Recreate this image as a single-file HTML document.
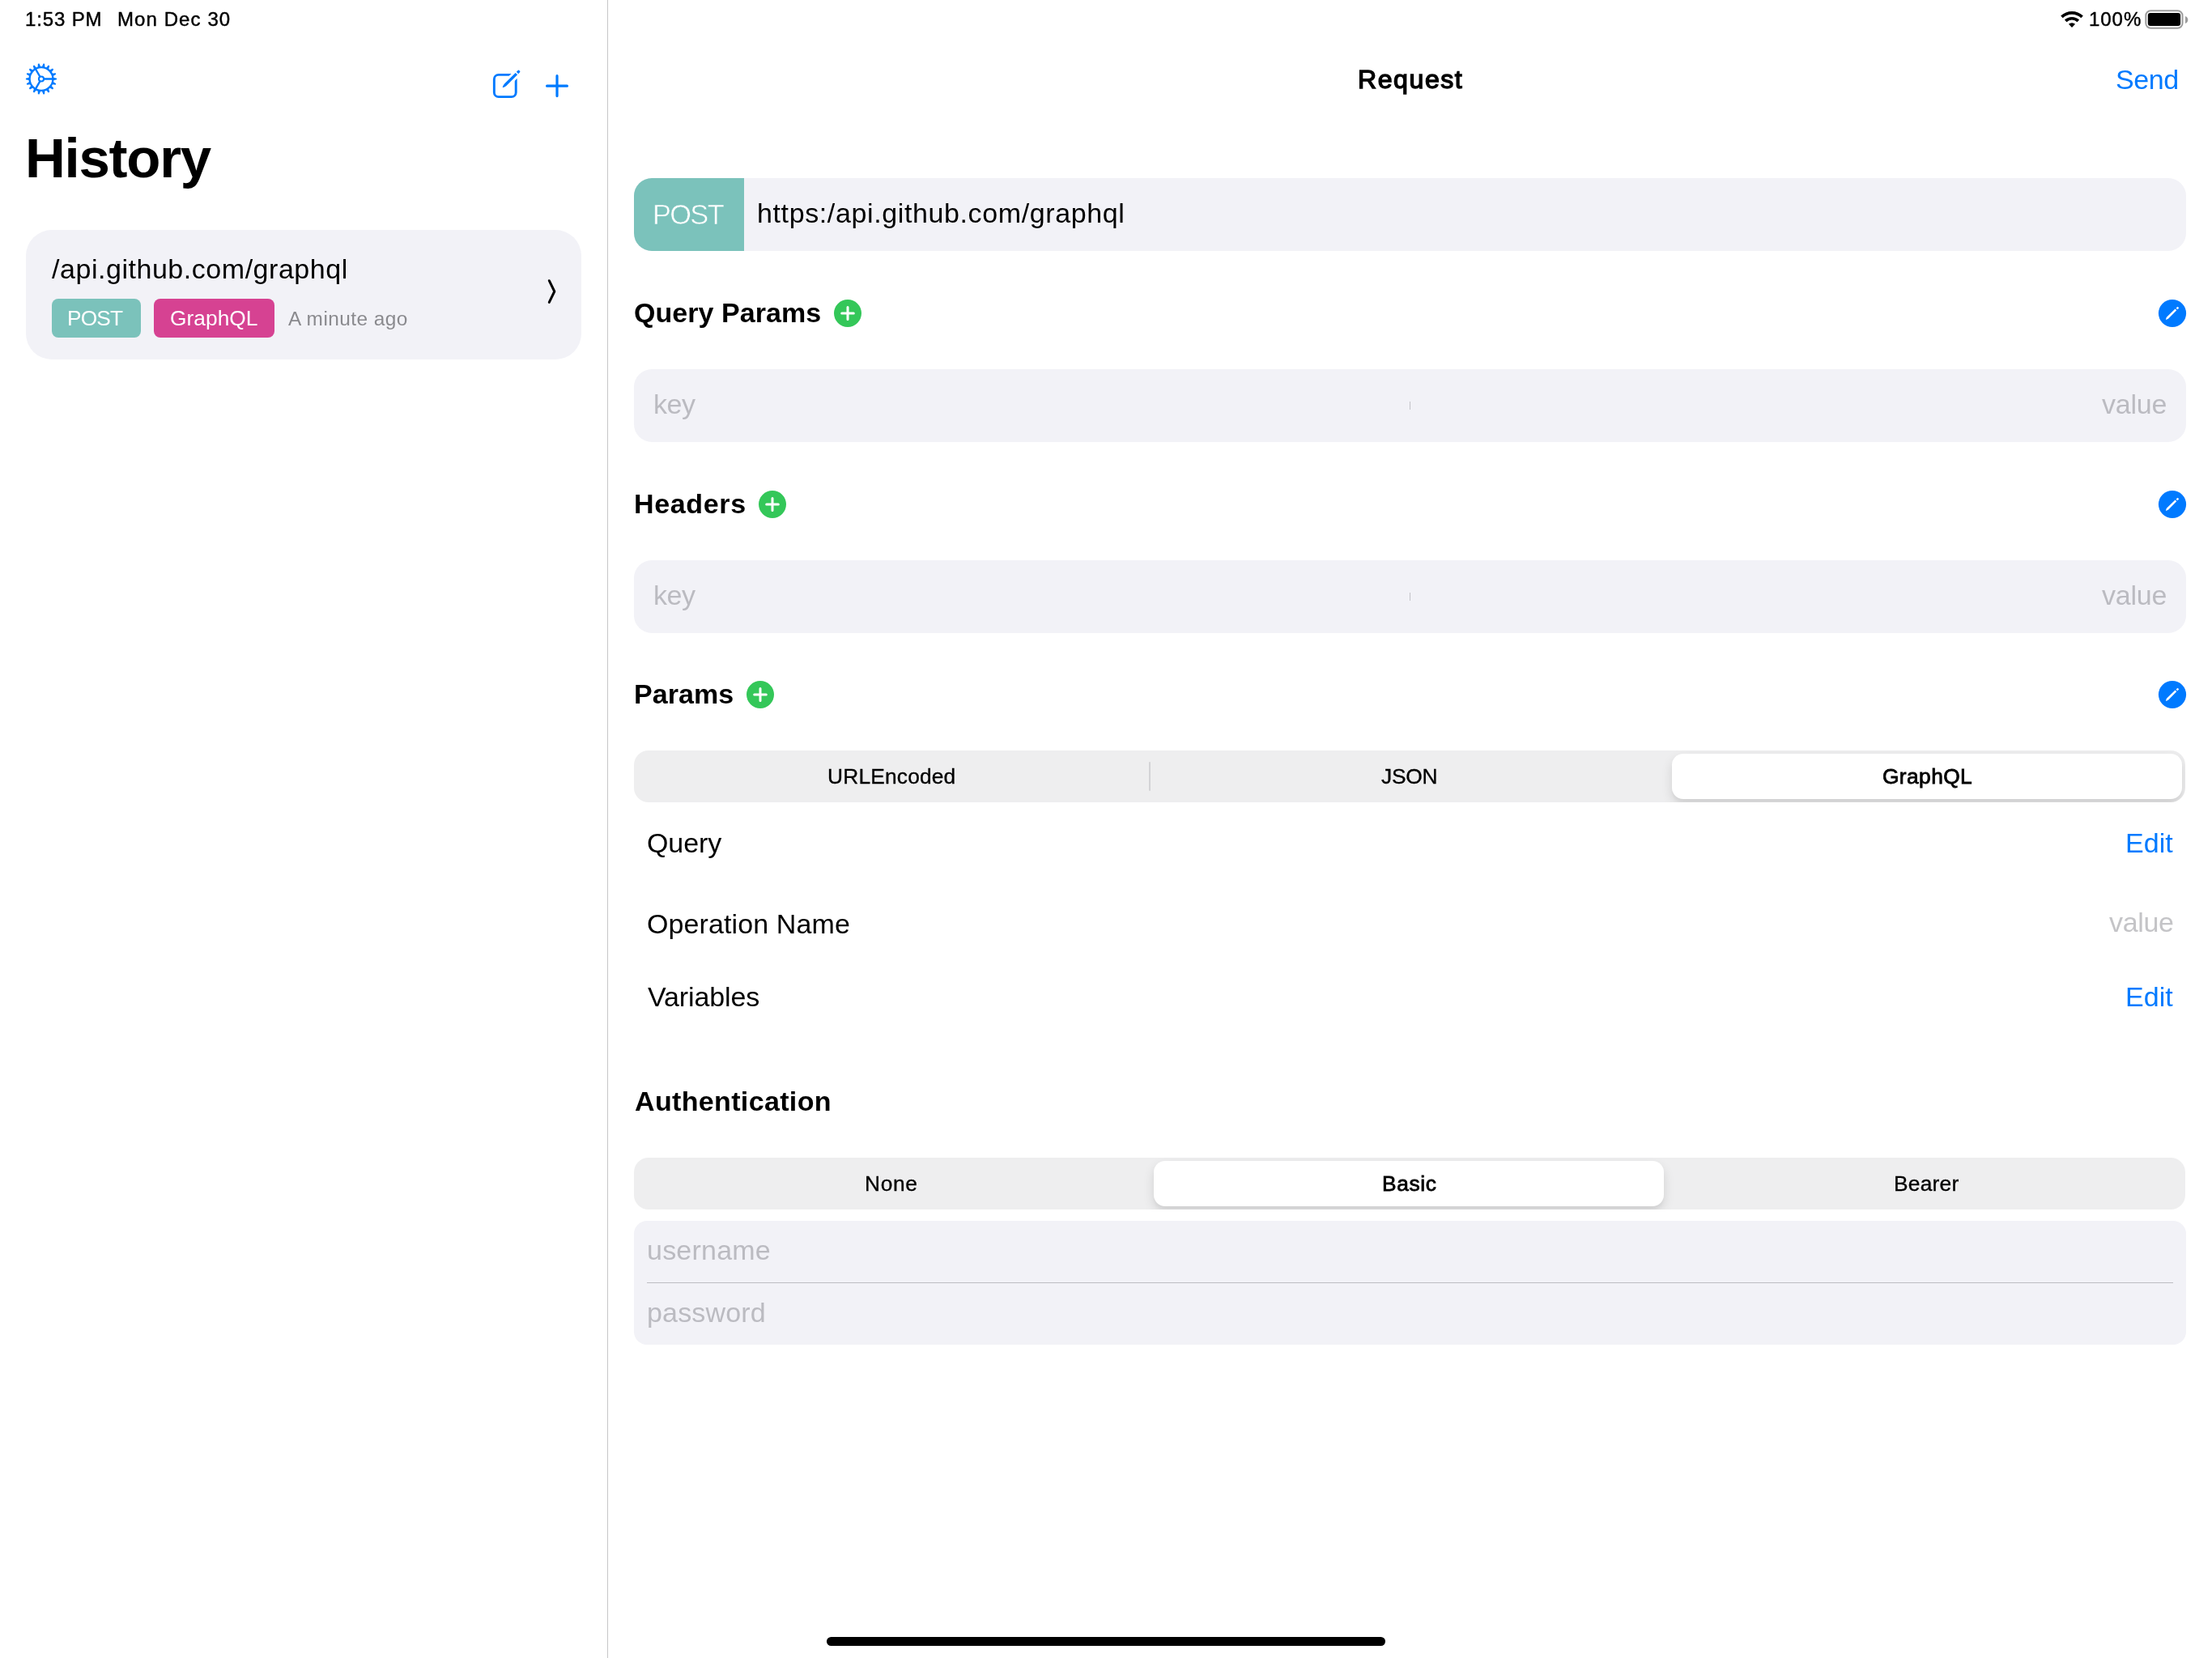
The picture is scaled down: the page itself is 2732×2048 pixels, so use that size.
<!DOCTYPE html>
<html lang="en"><head><meta charset="utf-8"><title>Request</title>
<style>
html,body{margin:0;padding:0;background:#fff;}
body{width:2732px;height:2048px;position:relative;overflow:hidden;font-family:"Liberation Sans",sans-serif;}
.t{position:absolute;line-height:0;white-space:nowrap;will-change:transform;}
.b{position:absolute;box-sizing:border-box;}
svg{position:absolute;overflow:visible;}
</style></head><body>

<header class="statusbar">
<div class="t" style="left:31.00px;top:23.98px;font-size:24px;color:#000;letter-spacing:0.861px;-webkit-text-stroke:0.45px #000;">1:53 PM</div>
<div class="t" style="left:145.36px;top:23.98px;font-size:24px;color:#000;letter-spacing:1.084px;-webkit-text-stroke:0.45px #000;">Mon Dec 30</div>
<div class="t" style="left:2580.00px;top:23.98px;font-size:24px;color:#000;letter-spacing:0.950px;-webkit-text-stroke:0.45px #000;">100%</div>
<svg style="left:2540px;top:10px" width="40" height="28" viewBox="2540 10 40 28"><path d="M2545.16 19.47 A20.1 20.1 0 0 1 2572.84 19.47 L2570.29 22.15 A16.4 16.4 0 0 0 2547.71 22.15 Z M2549.95 24.51 A13.15 13.15 0 0 1 2568.05 24.51 L2565.50 27.20 A9.45 9.45 0 0 0 2552.50 27.20 Z M2559.00 34.05 L2554.94 29.77 A5.9 5.9 0 0 1 2563.06 29.77 Z" fill="#000"/></svg>
<svg style="left:2645px;top:8px" width="56" height="32" viewBox="2645 8 56 32"><rect x="2650.3" y="13.2" width="45.2" height="21.6" rx="6" fill="none" stroke="#9c9c9c" stroke-width="2"/><rect x="2652.8" y="16" width="40.3" height="16" rx="3" fill="#000"/></svg>
<svg style="left:2698px;top:18px" width="6" height="14" viewBox="2698 18 6 14"><path d="M2699 20 Q2702.3 21.4 2702.3 24.5 Q2702.3 27.6 2699 29 Z" fill="#9c9c9c"/></svg>

</header>
<aside class="sidebar">
<div class="b" style="left:750px;top:0;width:1px;height:2048px;background:#c6c6c8;"></div>
<svg style="left:0;top:0" width="120" height="140" viewBox="0 0 120 140">
<path d="M65.89 95.70 L70.08 96.64 L70.08 98.36 L65.89 99.30Z M65.61 100.91 L69.22 103.22 L68.64 104.83 L64.38 104.28Z M63.56 105.70 L66.17 109.11 L65.06 110.42 L61.25 108.45Z M60.00 109.50 L61.28 113.59 L59.80 114.45 L56.89 111.29Z M55.35 111.85 L55.16 116.14 L53.47 116.44 L51.82 112.48Z M50.18 112.48 L48.53 116.44 L46.84 116.14 L46.65 111.85Z M45.11 111.29 L42.20 114.45 L40.72 113.59 L42.00 109.50Z M40.75 108.45 L36.94 110.42 L35.83 109.11 L38.44 105.70Z M37.62 104.28 L33.36 104.83 L32.78 103.22 L36.39 100.91Z M36.11 99.30 L31.92 98.36 L31.92 96.64 L36.11 95.70Z M36.39 94.09 L32.78 91.78 L33.36 90.17 L37.62 90.72Z M38.44 89.30 L35.83 85.89 L36.94 84.58 L40.75 86.55Z M42.00 85.50 L40.72 81.41 L42.20 80.55 L45.11 83.71Z M46.65 83.15 L46.84 78.86 L48.53 78.56 L50.18 82.52Z M51.82 82.52 L53.47 78.56 L55.16 78.86 L55.35 83.15Z M56.89 83.71 L59.80 80.55 L61.28 81.41 L60.00 85.50Z M61.25 86.55 L65.06 84.58 L66.17 85.89 L63.56 89.30Z M64.38 90.72 L68.64 90.17 L69.22 91.78 L65.61 94.09Z" fill="#007aff"/>
<circle cx="51.0" cy="97.5" r="14.4" fill="none" stroke="#007aff" stroke-width="2.3"/>
<circle cx="51.0" cy="97.5" r="3.05" fill="none" stroke="#007aff" stroke-width="2.1"/>
<path d="M54.60 97.50 L65.20 97.50 M49.20 94.38 L43.90 85.20 M49.20 100.62 L43.90 109.80" fill="none" stroke="#007aff" stroke-width="2.3"/>
</svg>
<svg style="left:600px;top:80px" width="110" height="50" viewBox="600 80 110 50">
<rect x="610.35" y="92.35" width="26.85" height="27.25" rx="5.4" fill="none" stroke="#007aff" stroke-width="2.9"/>
<path d="M622.77 106.23 L642.57 86.43" fill="none" stroke="#fff" stroke-width="9.2" stroke-linecap="butt"/>
<path d="M620.65 108.35 Q621.14 105.73 622.98 103.61 L636.70 89.89 L639.11 92.30 L625.39 106.02 Q623.27 107.86 620.65 108.35 Z M637.83 88.76 L639.67 86.92 Q640.45 86.15 641.23 86.92 L642.08 87.77 Q642.85 88.55 642.08 89.33 L640.24 91.17 Z" fill="#007aff"/>
<path d="M675.6 106.15 H700.4 M688 93.7 V118.6" fill="none" stroke="#007aff" stroke-width="3.2" stroke-linecap="round"/>
</svg>
<div class="t" style="left:31.28px;top:196.09px;font-size:69px;color:#000;font-weight:700;letter-spacing:-1.275px;">History</div>
<!-- history item -->
<div class="b" style="left:32px;top:284px;width:686px;height:160px;border-radius:32px;background:#f2f2f7;"></div>
<div class="b" style="left:64px;top:369px;width:110px;height:48px;border-radius:8px;background:#7bc2bb;"></div>
<div class="b" style="left:190px;top:369px;width:149px;height:48px;border-radius:8px;background:#d64292;"></div>
<div class="t" style="left:64.00px;top:331.62px;font-size:34px;color:#000;letter-spacing:0.537px;">/api.github.com/graphql</div>
<div class="t" style="left:83.04px;top:393.09px;font-size:26.3px;color:#fff;letter-spacing:-0.815px;">POST</div>
<div class="t" style="left:209.58px;top:393.09px;font-size:26.3px;color:#fff;letter-spacing:0.052px;">GraphQL</div>
<div class="t" style="left:356.25px;top:393.55px;font-size:24.4px;color:#8a8a8e;letter-spacing:0.458px;">A minute ago</div>
<svg style="left:670px;top:340px" width="24" height="40" viewBox="670 340 24 40"><path d="M678.3 346.7 L684.8 360 L678.3 373.4" fill="none" stroke="#000" stroke-width="3" stroke-linecap="round" stroke-linejoin="round"/></svg>
</aside>
<main class="detail">
<div class="t" style="left:1676.98px;top:97.91px;font-size:32px;color:#000;letter-spacing:1.595px;-webkit-text-stroke:1.4px #000;">Request</div>
<div class="t" style="left:2613.36px;top:98.02px;font-size:34px;color:#007aff;letter-spacing:-0.424px;">Send</div>
<!-- url bar -->
<div class="b" style="left:783px;top:220px;width:1917px;height:90px;border-radius:22px;background:#f2f2f7;overflow:hidden;"><div class="b" style="left:0;top:0;width:136px;height:90px;background:#7bc2bb;"></div></div>
<div class="t" style="left:806.20px;top:265.08px;font-size:34.4px;color:#fff;letter-spacing:-1.666px;-webkit-text-stroke:0.55px #7bc2bb;">POST</div>
<div class="t" style="left:935.44px;top:263.32px;font-size:34px;color:#000;letter-spacing:0.615px;">https:/api.github.com/graphql</div>
<!-- query params -->
<div class="t" style="left:783.11px;top:385.92px;font-size:34px;color:#000;font-weight:700;letter-spacing:0.064px;">Query Params</div>
<svg style="left:1030.0px;top:369.9px" width="34" height="34" viewBox="-17 -17 34 34"><circle r="17" fill="#34c759"/><path d="M-7.3 0 H7.3 M0 -7.4 V7.4" stroke="#fff" stroke-width="3" stroke-linecap="round" fill="none"/></svg>
<svg style="left:2666.0px;top:370.0px" width="34" height="34" viewBox="-17 -17 34 34"><circle r="17.1" fill="#007aff"/><path d="M-8.1 8 Q-7.6 5.4 -6.8 4.5 L3.5 -5.4 L5.3 -3.8 L-4.8 6.5 Q-5.8 7.3 -8.1 8 Z M4.6 -6.3 L6.2 -7.9 Q6.6 -8.2 7 -7.8 L7.9 -6.9 Q8.2 -6.5 7.9 -6.2 L6.3 -4.7 Z" fill="#fff"/></svg>
<div class="b" style="left:783px;top:456px;width:1917px;height:90px;border-radius:22px;background:#f2f2f7;"></div><div class="b" style="left:1741px;top:496px;width:1px;height:10px;background:#c3c3c8;"></div>
<div class="t" style="left:807.31px;top:499.12px;font-size:34px;color:#bbbbc1;letter-spacing:-0.476px;">key</div>
<div class="t" style="left:2596.08px;top:499.12px;font-size:34px;color:#bbbbc1;letter-spacing:-0.214px;">value</div>
<!-- headers -->
<div class="t" style="left:782.93px;top:622.42px;font-size:34px;color:#000;font-weight:700;letter-spacing:0.662px;">Headers</div>
<svg style="left:937.1px;top:605.9px" width="34" height="34" viewBox="-17 -17 34 34"><circle r="17" fill="#34c759"/><path d="M-7.3 0 H7.3 M0 -7.4 V7.4" stroke="#fff" stroke-width="3" stroke-linecap="round" fill="none"/></svg>
<svg style="left:2666.0px;top:606.0px" width="34" height="34" viewBox="-17 -17 34 34"><circle r="17.1" fill="#007aff"/><path d="M-8.1 8 Q-7.6 5.4 -6.8 4.5 L3.5 -5.4 L5.3 -3.8 L-4.8 6.5 Q-5.8 7.3 -8.1 8 Z M4.6 -6.3 L6.2 -7.9 Q6.6 -8.2 7 -7.8 L7.9 -6.9 Q8.2 -6.5 7.9 -6.2 L6.3 -4.7 Z" fill="#fff"/></svg>
<div class="b" style="left:783px;top:692px;width:1917px;height:90px;border-radius:22px;background:#f2f2f7;"></div><div class="b" style="left:1741px;top:732px;width:1px;height:10px;background:#c3c3c8;"></div>
<div class="t" style="left:807.31px;top:735.12px;font-size:34px;color:#bbbbc1;letter-spacing:-0.476px;">key</div>
<div class="t" style="left:2596.08px;top:735.12px;font-size:34px;color:#bbbbc1;letter-spacing:-0.214px;">value</div>
<!-- body params -->
<div class="t" style="left:782.93px;top:857.42px;font-size:34px;color:#000;font-weight:700;letter-spacing:0.079px;">Params</div>
<svg style="left:922.0px;top:841.0px" width="34" height="34" viewBox="-17 -17 34 34"><circle r="17" fill="#34c759"/><path d="M-7.3 0 H7.3 M0 -7.4 V7.4" stroke="#fff" stroke-width="3" stroke-linecap="round" fill="none"/></svg>
<svg style="left:2666.0px;top:841.0px" width="34" height="34" viewBox="-17 -17 34 34"><circle r="17.1" fill="#007aff"/><path d="M-8.1 8 Q-7.6 5.4 -6.8 4.5 L3.5 -5.4 L5.3 -3.8 L-4.8 6.5 Q-5.8 7.3 -8.1 8 Z M4.6 -6.3 L6.2 -7.9 Q6.6 -8.2 7 -7.8 L7.9 -6.9 Q8.2 -6.5 7.9 -6.2 L6.3 -4.7 Z" fill="#fff"/></svg>
<div class="b" style="left:783px;top:927px;width:1916px;height:64px;border-radius:18px;background:#eeeeef;overflow:hidden;"><div class="b" style="left:636px;top:14px;width:2px;height:36px;background:#d3d3d6;border-radius:1px;"></div><div class="b" style="left:1282px;top:4px;width:630px;height:56px;border-radius:14px;background:#fff;box-shadow:0 6px 14px rgba(0,0,0,0.12),0 5px 2px rgba(0,0,0,0.025);"></div></div>
<div class="t" style="left:1022.05px;top:958.89px;font-size:26.3px;color:#000;letter-spacing:0.203px;-webkit-text-stroke:0.35px #000;">URLEncoded</div>
<div class="t" style="left:1705.86px;top:958.89px;font-size:26.3px;color:#000;letter-spacing:-0.179px;-webkit-text-stroke:0.35px #000;">JSON</div>
<div class="t" style="left:2325.08px;top:958.89px;font-size:26.3px;color:#000;letter-spacing:0.419px;-webkit-text-stroke:0.8px #000;">GraphQL</div>
<div class="t" style="left:798.79px;top:1040.82px;font-size:34px;color:#000;letter-spacing:-0.078px;">Query</div>
<div class="t" style="left:2624.61px;top:1040.82px;font-size:34px;color:#007aff;letter-spacing:0.050px;">Edit</div>
<div class="t" style="left:798.79px;top:1141.22px;font-size:34px;color:#000;letter-spacing:0.104px;">Operation Name</div>
<div class="t" style="left:2604.58px;top:1138.82px;font-size:34px;color:#c4c4c7;letter-spacing:-0.314px;">value</div>
<div class="t" style="left:800.25px;top:1231.32px;font-size:34px;color:#000;letter-spacing:-0.118px;">Variables</div>
<div class="t" style="left:2624.61px;top:1231.32px;font-size:34px;color:#007aff;letter-spacing:0.050px;">Edit</div>
<!-- authentication -->
<div class="t" style="left:783.65px;top:1360.22px;font-size:34px;color:#000;font-weight:700;letter-spacing:0.351px;">Authentication</div>
<div class="b" style="left:783px;top:1430px;width:1916px;height:64px;border-radius:18px;background:#eeeeef;overflow:hidden;"><div class="b" style="left:642px;top:4px;width:629.5px;height:56px;border-radius:14px;background:#fff;box-shadow:0 6px 14px rgba(0,0,0,0.12),0 5px 2px rgba(0,0,0,0.025);"></div></div>
<div class="t" style="left:1068.22px;top:1461.89px;font-size:26.3px;color:#000;letter-spacing:0.700px;-webkit-text-stroke:0.35px #000;">None</div>
<div class="t" style="left:1706.74px;top:1461.89px;font-size:26.3px;color:#000;letter-spacing:0.660px;-webkit-text-stroke:0.8px #000;">Basic</div>
<div class="t" style="left:2339.32px;top:1461.89px;font-size:26.3px;color:#000;letter-spacing:0.241px;-webkit-text-stroke:0.35px #000;">Bearer</div>
<div class="b" style="left:783px;top:1508px;width:1917px;height:153px;border-radius:16px;background:#f2f2f7;"></div>
<div class="b" style="left:799px;top:1584px;width:1885px;height:1px;background:#bdbdc2;"></div>
<div class="t" style="left:798.79px;top:1544.32px;font-size:34px;color:#bbbbc1;letter-spacing:0.218px;">username</div>
<div class="t" style="left:798.81px;top:1620.92px;font-size:34px;color:#bbbbc1;letter-spacing:0.181px;">password</div>
</main>
<div class="b" style="left:1021px;top:2022px;width:690px;height:11px;border-radius:5.5px;background:#000;"></div>
</body></html>
